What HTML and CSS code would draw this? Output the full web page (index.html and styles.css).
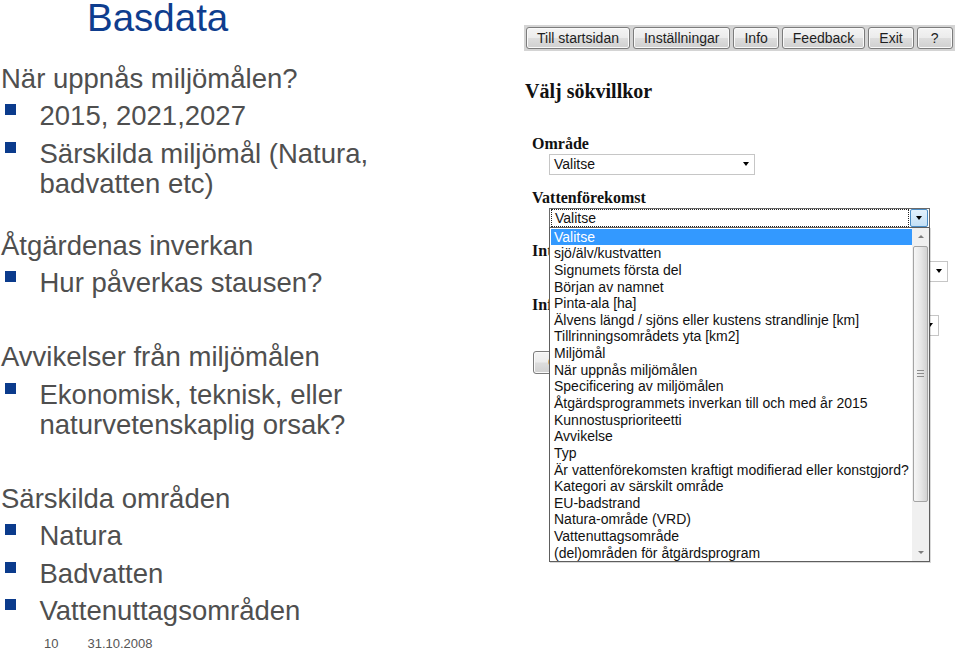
FILE: index.html
```html
<!DOCTYPE html>
<html lang="sv">
<head>
  <meta charset="UTF-8">
  <meta name="viewport" content="width=device-width, initial-scale=1.0">
  <title>Basdata</title>
  <link rel="stylesheet" href="styles.css">
</head>
<body>
  <div class="slide">
    <h1>Basdata</h1>
    <div class="group first">
      <p class="lead">När uppnås miljömålen?</p>
      <ul class="points">
        <li>2015, 2021,2027</li>
        <li>Särskilda miljömål (Natura, badvatten etc)</li>
      </ul>
    </div>
    <div class="group near">
      <p class="lead">Åtgärdenas inverkan</p>
      <ul class="points">
        <li>Hur påverkas stausen?</li>
      </ul>
    </div>
    <div class="group">
      <p class="lead">Avvikelser från miljömålen</p>
      <ul class="points">
        <li>Ekonomisk, teknisk, eller naturvetenskaplig orsak?</li>
      </ul>
    </div>
    <div class="group">
      <p class="lead">Särskilda områden</p>
      <ul class="points">
        <li>Natura</li>
        <li>Badvatten</li>
        <li>Vattenuttagsområden</li>
      </ul>
    </div>
    <div class="footer">
      <span>10</span>
      <span>31.10.2008</span>
    </div>
  </div>

  <div class="app">
    <div class="toolbar">
      <button>Till startsidan</button>
      <button>Inställningar</button>
      <button>Info</button>
      <button>Feedback</button>
      <button>Exit</button>
      <button class="help">?</button>
    </div>

    <h2>Välj sökvillkor</h2>

    <div class="field">
      <h3>Område</h3>
      <div class="select area">
        <span>Valitse</span>
        <span class="caret"></span>
      </div>
    </div>

    <div class="field">
      <h3>Vattenförekomst</h3>
      <div class="select open">
        <span class="focus">Valitse</span>
        <span class="drop-btn"><span class="caret"></span></span>

        <div class="list">
          <ul class="options">
            <li class="selected">Valitse</li>
            <li>sjö/älv/kustvatten</li>
            <li>Signumets första del</li>
            <li>Början av namnet</li>
            <li>Pinta-ala [ha]</li>
            <li>Älvens längd / sjöns eller kustens strandlinje [km]</li>
            <li>Tillrinningsområdets yta [km2]</li>
            <li>Miljömål</li>
            <li>När uppnås miljömålen</li>
            <li>Specificering av miljömålen</li>
            <li>Åtgärdsprogrammets inverkan till och med år 2015</li>
            <li>Kunnostusprioriteetti</li>
            <li>Avvikelse</li>
            <li>Typ</li>
            <li>Är vattenförekomsten kraftigt modifierad eller konstgjord?</li>
            <li>Kategori av särskilt område</li>
            <li>EU-badstrand</li>
            <li>Natura-område (VRD)</li>
            <li>Vattenuttagsområde</li>
            <li>(del)områden för åtgärdsprogram</li>
          </ul>
          <div class="scrollbar">
            <div class="sb-btn"><span class="tri up"></span></div>
            <div class="thumb"><span class="grip"></span></div>
            <div class="track"></div>
            <div class="sb-btn"><span class="tri down"></span></div>
          </div>
        </div>
      </div>
    </div>

    <div class="field">
      <h3>Intervall</h3>
      <div class="select wide">
        <span></span>
        <span class="caret"></span>
      </div>
    </div>

    <div class="field">
      <h3>Information</h3>
      <div class="select mid">
        <span></span>
        <span class="caret"></span>
      </div>
    </div>

    <button class="go">Gå</button>
  </div>
</body>
</html>
```

FILE: styles.css
```css
body {
  margin: 0;
  padding: 0;
  display: flex;
  background: #fff;
  font-family: "Liberation Sans", Arial, sans-serif;
}

/* slide text on the left */
.slide {
  flex: 0 0 400px;
  padding-left: 1px;
  box-sizing: border-box;
  color: #4f4f4f;
  font-size: 27.5px;
  line-height: 30px;
}
.slide h1 {
  margin: 0;
  padding-left: 86px;
  font-size: 38.5px;
  line-height: 36px;
  font-weight: normal;
  color: #0e3d8e;
}
.group {
  margin-top: 44px;
}
.group.first {
  margin-top: 27.6px;
}
.group.near {
  margin-top: 32px;
}
.lead {
  margin: 0;
}
.points {
  margin: 0;
  padding: 0;
  list-style: none;
}
.points li {
  display: flex;
  margin-top: 7.5px;
}
.points li::before {
  content: "";
  flex: 0 0 11px;
  height: 11px;
  margin: 3px 23.5px 0 4px;
  background: #0b3b8c;
}
.footer {
  display: flex;
  gap: 29px;
  margin: 9.5px 0 0 43px;
  font-size: 13px;
  line-height: 16px;
  color: #555;
}

/* web form screenshot on the right */
.app {
  margin-left: 124px;
  padding-top: 25px;
  font-size: 14px;
  color: #111;
}
.toolbar {
  display: flex;
  gap: 3px;
  width: fit-content;
  padding: 2px;
  background: #d4d4d4;
}
.toolbar button,
.go {
  height: 22px;
  padding: 0 10px;
  border: 1px solid #7c7c7c;
  border-radius: 3px;
  box-shadow: inset 0 0 0 1px #fafafa;
  background: linear-gradient(#f4f4f4, #ececec 48%, #dddddd 52%, #d0d0d0);
  font-family: "Liberation Sans", Arial, sans-serif;
  font-size: 14px;
  line-height: 20px;
  color: #1e1e1e;
}
.toolbar .help {
  min-width: 36px;
}
.app h2 {
  margin: 28px 0 0 1px;
  font-family: "Liberation Serif", "Times New Roman", serif;
  font-size: 20px;
  line-height: 24px;
  font-weight: bold;
}
.field {
  margin-top: 13px;
}
.app h2 + .field {
  margin-top: 30.6px;
}
.field h3 {
  margin: 0 0 0 8px;
  font-family: "Liberation Serif", "Times New Roman", serif;
  font-size: 16px;
  line-height: 20px;
  font-weight: bold;
}
.select {
  position: relative;
  display: flex;
  align-items: center;
  justify-content: space-between;
  box-sizing: border-box;
  height: 21px;
  margin-left: 25px;
  padding: 0 5px 0 4px;
  border: 1px solid #c6c6c6;
  background: #fff;
  line-height: 16px;
}
.select.area {
  width: 206px;
}
.select.wide {
  width: 399px;
}
.select.mid {
  width: 390px;
}
.caret {
  width: 0;
  height: 0;
  border-left: 3.5px solid transparent;
  border-right: 3.5px solid transparent;
  border-top: 4px solid #000;
}
.select.open {
  z-index: 2;
  width: 381px;
  height: 20px;
  padding: 0 1px 0 1px;
  border-color: #6a6a6a;
}
.focus {
  flex: 1;
  height: 18px;
  box-sizing: border-box;
  padding-left: 3px;
  border: 1px dotted #222;
  line-height: 16px;
}
.drop-btn {
  display: flex;
  align-items: center;
  justify-content: center;
  box-sizing: border-box;
  width: 18px;
  height: 18px;
  margin-left: 1px;
  border: 1px solid #4b8cc4;
  border-radius: 2px;
  background: linear-gradient(#e3f1fc, #c4e0f6);
}

/* the opened option list */
.list {
  position: absolute;
  top: 100%;
  left: -1px;
  display: flex;
  width: 381px;
  box-sizing: border-box;
  border: 1px solid #5e5e5e;
  background: #fff;
  box-shadow: 1px 1px 0 rgba(0, 0, 0, 0.15);
}
.options {
  flex: 1;
  margin: 0;
  padding: 1px 0 0 1px;
  list-style: none;
}
.options li {
  height: 16.65px;
  padding-left: 3px;
  line-height: 16.65px;
  white-space: nowrap;
  color: #111;
}
.options li.selected {
  background: #3399ff;
  color: #fff;
}
.scrollbar {
  display: flex;
  flex-direction: column;
  width: 17px;
  background: #f0f0f0;
}
.sb-btn {
  display: flex;
  align-items: center;
  justify-content: center;
  height: 17px;
}
.tri {
  width: 0;
  height: 0;
  border-left: 3px solid transparent;
  border-right: 3px solid transparent;
}
.tri.up {
  border-bottom: 3px solid #7d7d7d;
}
.tri.down {
  border-top: 3px solid #7d7d7d;
}
.thumb {
  display: flex;
  align-items: center;
  justify-content: center;
  box-sizing: border-box;
  height: 256px;
  margin: 1px 1px 0 1px;
  border: 1px solid #a4a4a4;
  border-radius: 2px;
  background: linear-gradient(to right, #f6f6f6, #e6e6e6 55%, #d2d2d2);
}
.grip {
  width: 7px;
  height: 5px;
  border-top: 1px solid #8c8c8c;
  border-bottom: 1px solid #8c8c8c;
  background: linear-gradient(transparent 2px, #8c8c8c 2px, #8c8c8c 3px, transparent 3px);
}
.track {
  flex: 1;
}
.go {
  margin: 15px 0 0 9px;
  height: 23px;
  padding: 0 14px;
}
```
